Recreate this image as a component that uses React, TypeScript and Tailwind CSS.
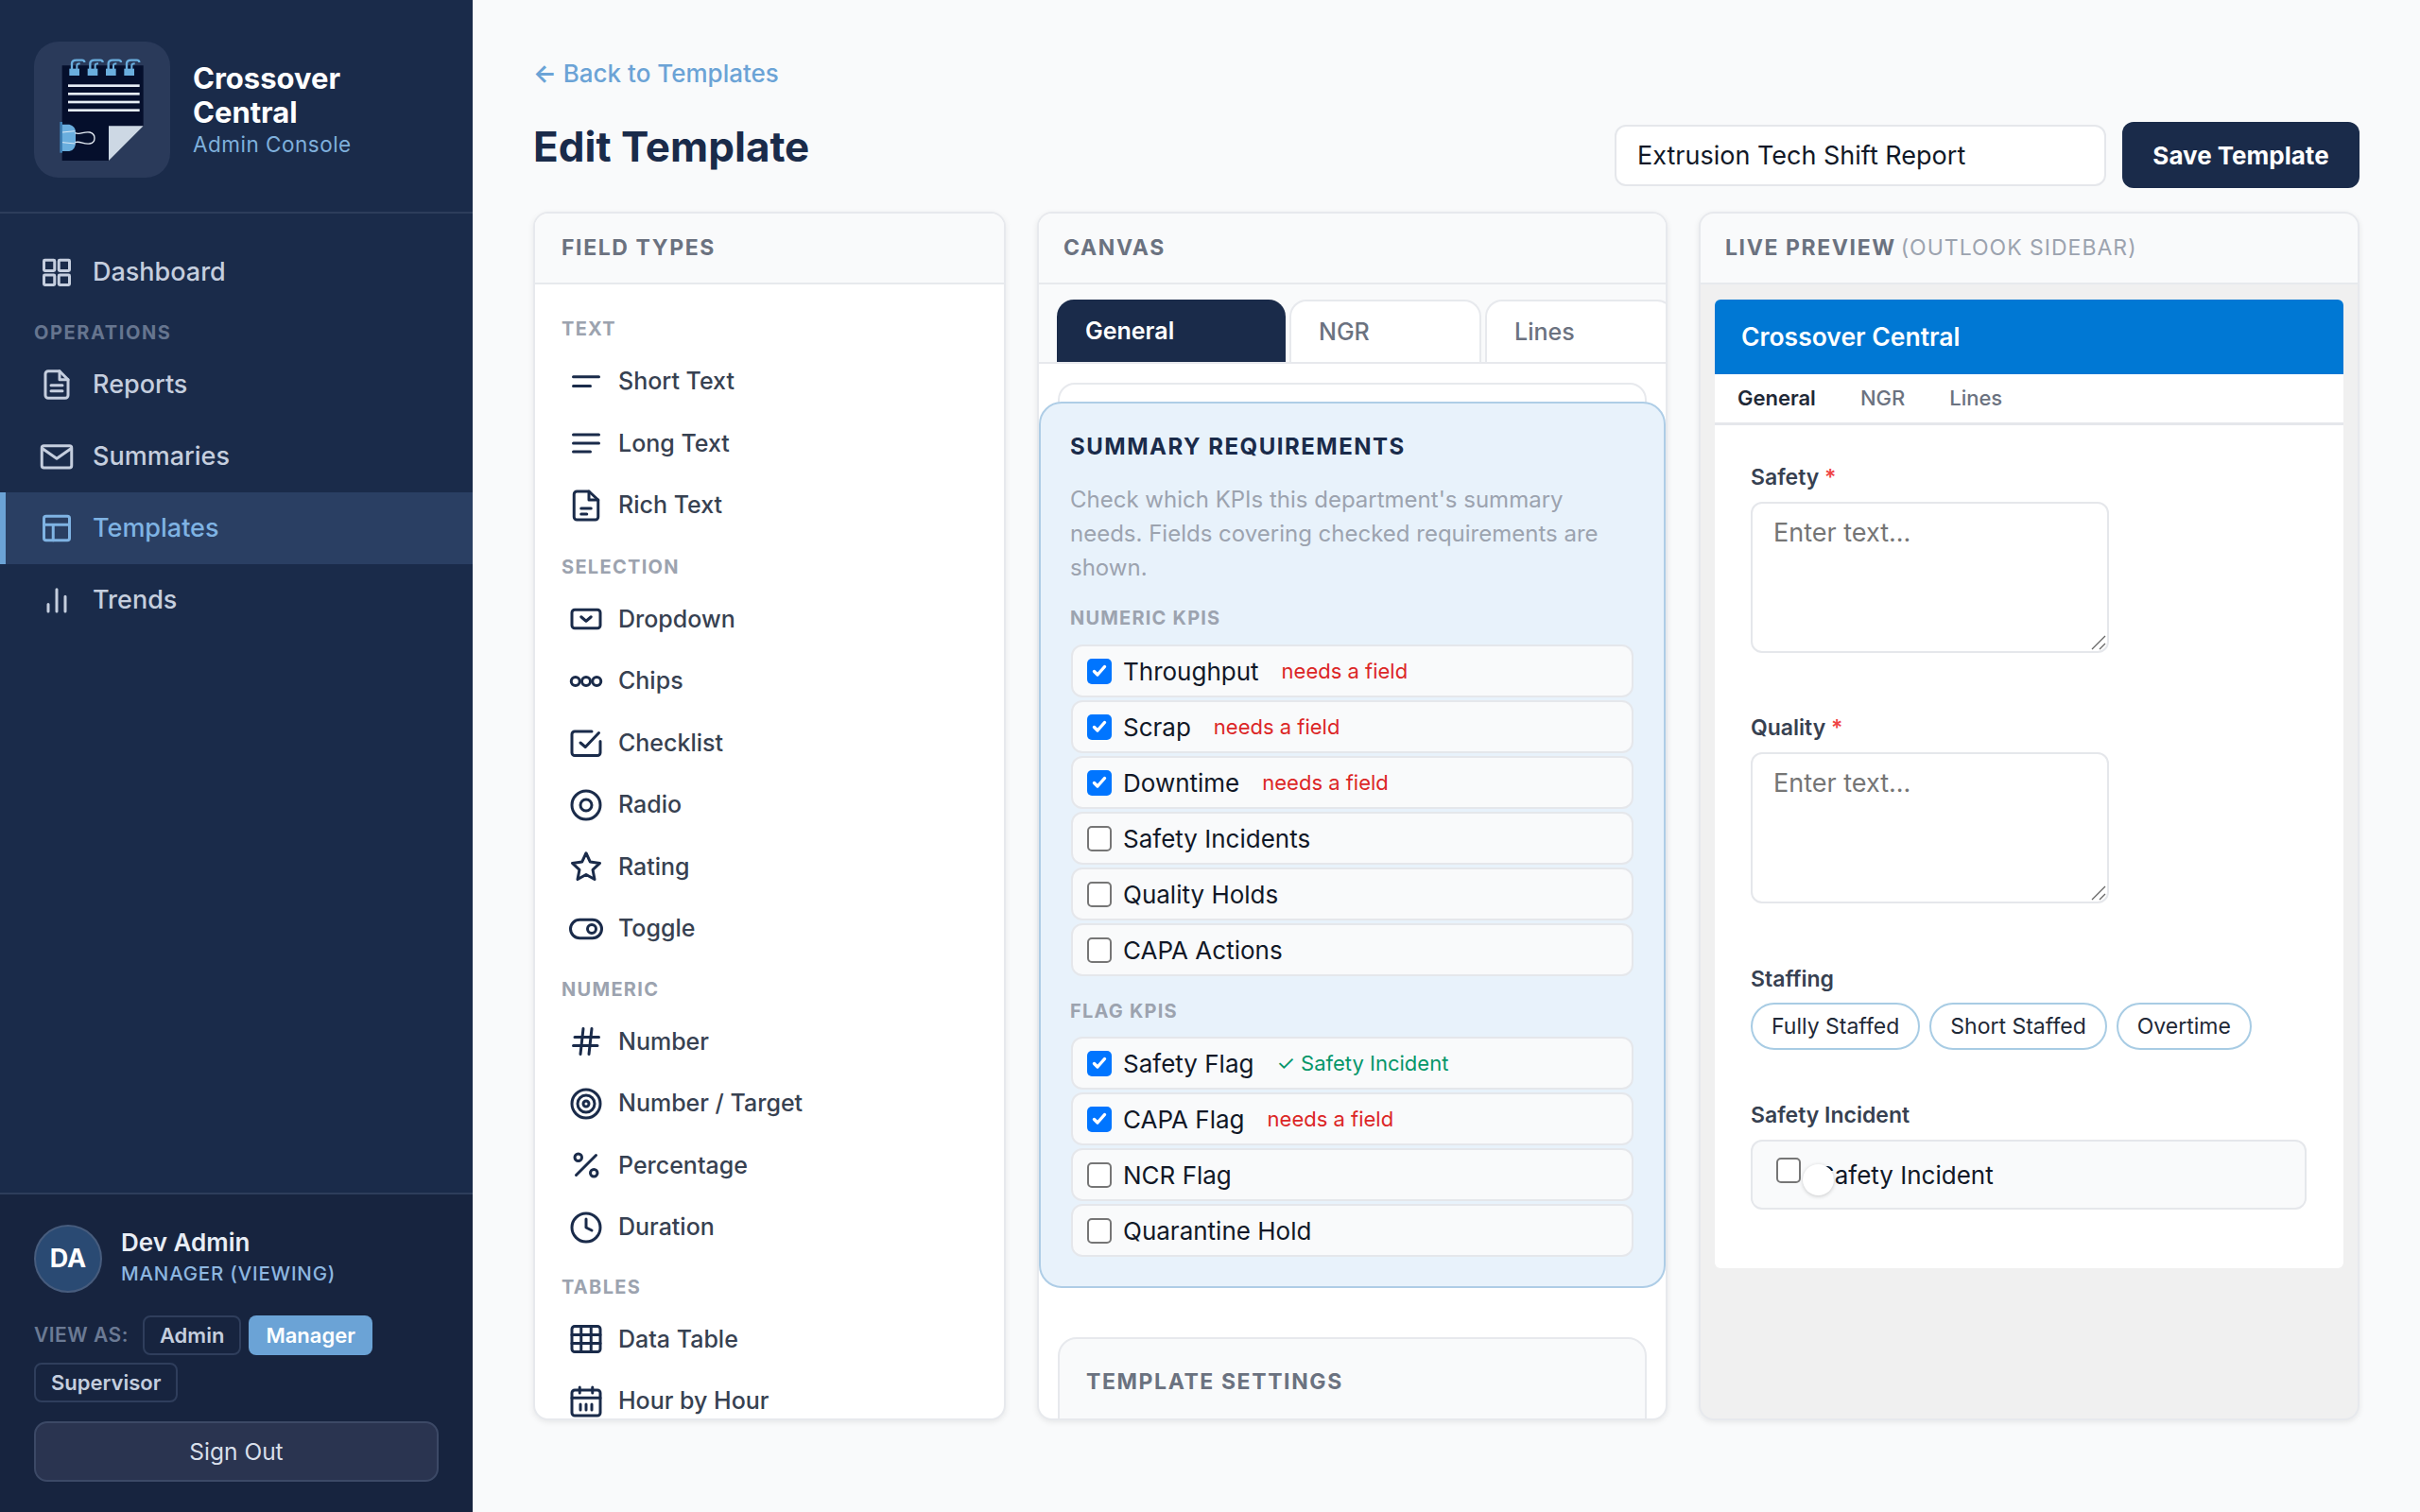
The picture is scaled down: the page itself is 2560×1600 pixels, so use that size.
import type {ReactNode} from 'react';

const Ico = ({children, size = 36, sw = 2}: {children: ReactNode; size?: number; sw?: number}) => (
    <svg width={size} height={size} viewBox="0 0 24 24" fill="none" stroke="currentColor" strokeWidth={sw}
         strokeLinecap="round" strokeLinejoin="round" className="shrink-0">
        {children}
    </svg>
);

const Logo = () => (
    <svg viewBox="48 42 432 432" className="w-full h-full">
        <path d="M137 118H395V310L285 420H137Z" fill="#050f2c"/>
        <path d="M285 310H395L285 420Z" fill="#cdd8e4"/>
        {[182, 208, 234, 260].map(y => <rect key={y} x="156" y={y - 4} width="227" height="8" fill="#e6edf5"/>)}
        {[158, 216, 274, 332].map(x => (
            <g key={x}>
                <rect x={x + 2} y="128" width="32" height="22" fill="#6aaede"/>
                <path d={`M${x + 10} 130V112Q${x + 10} 101 ${x + 24} 101H${x + 42}Q${x + 50} 101 ${x + 50} 108`}
                      stroke="#6aaede" strokeWidth="7" fill="none"/>
                <path d={`M${x + 26} 130V118Q${x + 26} 112 ${x + 36} 112`} stroke="#6aaede" strokeWidth="6"
                      fill="none"/>
            </g>
        ))}
        <path d="M133 305H160Q180 310 180 330V362Q180 385 160 390H133Z" fill="#6aaede"/>
        <path d="M130 297H138V395H130Z" fill="#3d7fb5"/>
        <path d="M138 330L178 326M138 362L178 366" stroke="#dbe9f5" strokeWidth="3"/>
        <path d="M178 332C195 340 205 326 225 330C245 335 245 362 225 366C205 370 195 356 178 362" stroke="#e6edf5"
              strokeWidth="4" fill="none"/>
    </svg>
);

const NavItem = ({icon, label, active}: {icon: ReactNode; label: string; active?: boolean}) => (
    <div className={active
        ? 'h-[76px] flex items-center gap-[20px] pl-[36px] border-l-[6px] border-[#6ba3d6] bg-[#2a3f63] text-[#7fb3e3]'
        : 'h-[76px] flex items-center gap-[20px] pl-[42px] text-[#c5cede]'}>
        {icon}
        <span className="text-[27px] font-medium leading-[36px]">{label}</span>
    </div>
);

const Sidebar = () => (
    <aside className="w-[500px] shrink-0 h-full bg-[#1a2b4a] flex flex-col">
        <div className="h-[226px] border-b-2 border-[#2d3d5b] px-[36px] pt-[44px] flex items-start gap-[24px]">
            <div className="w-[144px] h-[144px] rounded-[26px] bg-[#2a3a5a] shrink-0">
                <Logo/>
            </div>
            <div className="pt-[21px]">
                <div className="text-[31px] font-bold leading-[36px] text-white w-[180px]">Crossover Central</div>
                <div className="text-[22.500px] leading-[28px] tracking-[0.5px] text-[#7fb0dc] mt-[2px]">Admin Console</div>
            </div>
        </div>
        <nav className="pt-[24px]">
            <NavItem label="Dashboard" icon={
                <Ico size={36}><rect x="3" y="3.500" width="7.500" height="7.500" rx="0.600"/><rect x="13.500" y="3.500" width="7.500" height="7.500" rx="0.600"/><rect x="3" y="14" width="7.500" height="7" rx="0.600"/><rect x="13.500" y="14" width="7.500" height="7" rx="0.600"/></Ico>
            }/>
            <div className="h-[43px] pt-[14px] pl-[36px] text-[20px] leading-[24px] font-bold tracking-[1.600px] text-[#66758f]">OPERATIONS</div>
            <NavItem label="Reports" icon={
                <Ico size={36}><path d="M14 2.500H6A2 2 0 0 0 4 4.500v15a2 2 0 0 0 2 2h12a2 2 0 0 0 2-2V8.500Z"/><path d="M14 2.500v6h6"/><path d="M8 12.500h8M8 16.500h8"/></Ico>
            }/>
            <NavItem label="Summaries" icon={
                <Ico size={36}><rect x="1.500" y="4.500" width="21" height="15.500" rx="1.500"/><path d="M2 6.500l10 7 10-7"/></Ico>
            }/>
            <NavItem active label="Templates" icon={
                <Ico size={36}><rect x="3" y="3.500" width="18" height="17" rx="1.500"/><path d="M3 9.500h18M9.500 9.500v11"/></Ico>
            }/>
            <NavItem label="Trends" icon={
                <Ico size={36}><path d="M6 20v-5M12 20V4.500M18 20V9.500"/></Ico>
            }/>
        </nav>
        <div className="mt-auto h-[338px] border-t-2 border-[#2d3d5b] bg-[#17243f] px-[36px] pt-[32px]">
            <div className="flex items-center gap-[20px]">
                <div className="w-[72px] h-[72px] rounded-full bg-[#2a4a73] border-2 border-[#475c7d] flex items-center justify-center text-[27px] font-bold text-white">DA</div>
                <div>
                    <div className="-mt-[5px] text-[26px] leading-[36px] font-semibold text-[#e8edf5]">Dev Admin</div>
                    <div className="mt-[1px] text-[20.500px] leading-[28px] font-medium tracking-[0.8px] text-[#8db7e0]">MANAGER (VIEWING)</div>
                </div>
            </div>
            <div className="mt-[24px] flex flex-wrap items-center gap-x-[8px] gap-y-[8px]">
                <span className="text-[21px] leading-[28px] font-semibold tracking-[0.5px] text-[#6b7a94] mr-[7px]">VIEW AS:</span>
                <span className="h-[42px] px-[16px] flex items-center rounded-[8px] border-2 border-[#2f3e5c] text-[22px] font-semibold text-[#c4cede]">Admin</span>
                <span className="h-[42px] px-[18px] flex items-center rounded-[8px] bg-[#6ba3d6] text-[22px] font-semibold text-white">Manager</span>
                <span className="h-[42px] px-[16px] flex items-center rounded-[8px] border-2 border-[#2f3e5c] text-[22px] font-semibold text-[#c4cede]">Supervisor</span>
            </div>
            <button className="mt-[20px] w-[428px] h-[64px] rounded-[14px] bg-[#2a3450] border-2 border-[#3c4966] text-[24.500px] text-[#d8dfea]">Sign Out</button>
        </div>
    </aside>
);

const FieldLabel = ({children}: {children: ReactNode}) => (
    <div className="h-[40px] flex items-center text-[20px] font-bold tracking-[1.300px] text-[#9ca3af]">{children}</div>
);

const FieldItem = ({icon, label}: {icon: ReactNode; label: string}) => (
    <div className="h-[65.500px] flex items-center gap-[16px] pl-[8px] text-[#1a2b4a]">
        {icon}
        <span className="text-[25px] font-medium text-[#374151]">{label}</span>
    </div>
);

const PanelHead = ({children, inset}: {children: ReactNode; inset?: boolean}) => (
    <div className={`${inset ? 'px-[26px]' : 'px-[28px]'} h-[75px] shrink-0 bg-[#f9fafb] border-b-2 border-[#e7e9ed] flex items-center text-[23px] font-bold tracking-[1.600px] text-[#6b7280]`}>
        {children}
    </div>
);

const FieldTypes = () => (
    <section className="h-full bg-white rounded-[16px] border-2 border-[#e7e9ed] shadow-[0_2px_6px_rgba(0,0,0,0.08)] overflow-hidden flex flex-col">
        <PanelHead>FIELD TYPES</PanelHead>
        <div className="px-[28px] pt-[27px]">
            <FieldLabel>TEXT</FieldLabel>
            <div className="mt-[3px]">
                <FieldItem label="Short Text" icon={<Ico><path d="M3 8.500h18M3 15h12"/></Ico>}/>
                <FieldItem label="Long Text" icon={<Ico><path d="M3 6h18M3 12h18M3 18h12"/></Ico>}/>
                <FieldItem label="Rich Text" icon={<Ico><path d="M14 2H5.500a2 2 0 0 0-2 2v16a2 2 0 0 0 2 2h13a2 2 0 0 0 2-2V8z"/><path d="M14 2v6h6.500M8.500 14h7M8.500 18h4"/></Ico>}/>
            </div>
            <div className="mt-[12px]"><FieldLabel>SELECTION</FieldLabel></div>
            <div className="mt-[3px]">
                <FieldItem label="Dropdown" icon={<Ico><rect x="2" y="5.500" width="20" height="13" rx="2"/><path d="M8.500 10.500l3.500 3 3.500-3"/></Ico>}/>
                <FieldItem label="Chips" icon={<Ico><circle cx="4.500" cy="12" r="3"/><circle cx="12" cy="12" r="3"/><circle cx="19.500" cy="12" r="3"/></Ico>}/>
                <FieldItem label="Checklist" icon={<Ico><path d="M16 4H4a2 2 0 0 0-2 2v13a2 2 0 0 0 2 2h16a2 2 0 0 0 2-2v-8"/><path d="M8 12l3.500 3L21 5"/></Ico>}/>
                <FieldItem label="Radio" icon={<Ico><circle cx="12" cy="12" r="10"/><circle cx="12" cy="12" r="4"/></Ico>}/>
                <FieldItem label="Rating" icon={<Ico><path d="M12 2.500l2.900 6.200 6.800.9-5 4.700 1.300 6.700-6-3.300-6 3.300 1.300-6.700-5-4.700 6.800-.9z"/></Ico>}/>
                <FieldItem label="Toggle" icon={<Ico><rect x="1" y="5.500" width="22" height="13" rx="6.500"/><circle cx="16" cy="12" r="3"/></Ico>}/>
            </div>
            <div className="mt-[11px]"><FieldLabel>NUMERIC</FieldLabel></div>
            <div className="mt-[3px]">
                <FieldItem label="Number" icon={<Ico><path d="M4 9h17M3 15h17M10 3L8 21M16 3l-2 18"/></Ico>}/>
                <FieldItem label="Number / Target" icon={<Ico><circle cx="12" cy="12" r="10"/><circle cx="12" cy="12" r="6"/><circle cx="12" cy="12" r="2"/></Ico>}/>
                <FieldItem label="Percentage" icon={<Ico><path d="M19 5L5 19"/><circle cx="6.500" cy="6.500" r="2.500"/><circle cx="17.500" cy="17.500" r="2.500"/></Ico>}/>
                <FieldItem label="Duration" icon={<Ico><circle cx="12" cy="12" r="10"/><path d="M12 6v6l4 2"/></Ico>}/>
            </div>
            <div className="mt-[10px]"><FieldLabel>TABLES</FieldLabel></div>
            <div className="mt-[3px]">
                <FieldItem label="Data Table" icon={<Ico><rect x="2" y="3" width="20" height="18" rx="2"/><path d="M2 9h20M2 15h20M8.500 3v18M15.500 3v18"/></Ico>}/>
                <FieldItem label="Hour by Hour" icon={<Ico><rect x="2" y="4" width="20" height="18" rx="2"/><path d="M2 9.500h20M7.500 2v4M8 14v4M12 14v4M16 14v4M16.500 2v4"/></Ico>}/>
            </div>
        </div>
    </section>
);

const Check = ({on, className}: {on?: boolean; className?: string}) => (
    <span className={`${on ? 'bg-[#0075ff]' : 'bg-white border-2 border-[#767676]'} w-[26px] h-[27px] rounded-[5px] shrink-0 flex items-center justify-center ${className ?? ''}`}>
        {on && (
            <svg width="20" height="20" viewBox="0 0 20 20" fill="none" stroke="white" strokeWidth="3.400" strokeLinecap="round" strokeLinejoin="round">
                <path d="M4.500 10.500l3.500 3.500 7.500-8.500"/>
            </svg>
        )}
    </span>
);

const Kpi = ({label, on, hint, ok}: {label: string; on?: boolean; hint?: string; ok?: boolean}) => (
    <div className="h-[56px] mb-[3px] bg-[#f9fafb] border-2 border-[#e5e7eb] rounded-[12px] flex items-center pl-[15px]">
        <Check on={on}/>
        <span className="ml-[12px] text-[26px] text-[#111827]">{label}</span>
        {hint && <span className={`ml-[24px] text-[22px] ${ok ? 'text-[#059669]' : 'text-[#dc2626]'}`}>{hint}</span>}
    </div>
);

const CanvasPanel = () => (
    <section className="h-full bg-white rounded-[16px] border-2 border-[#e7e9ed] shadow-[0_2px_6px_rgba(0,0,0,0.08)] overflow-hidden flex flex-col">
        <PanelHead inset>CANVAS</PanelHead>
        <div className="bg-[#f9fafb] h-[16px] shrink-0"/>
        <div className="bg-[#f9fafb] shrink-0 flex gap-[4px] pl-[19px] h-[68px] border-b-2 border-[#e7e9ed] overflow-hidden">
            <div className="w-[242px] shrink-0 h-[66px] rounded-t-[18px] bg-[#1a2b4a] pl-[30px] pt-[2px] flex items-center text-[25px] font-semibold text-white">General</div>
            <div className="w-[203px] h-[66px] rounded-t-[18px] bg-white border-2 border-b-0 border-[#e7e9ed] pl-[29px] pt-[2px] flex items-center text-[25px] font-medium text-[#6b7280] shrink-0">NGR</div>
            <div className="w-[200px] h-[66px] rounded-t-[18px] bg-white border-2 border-b-0 border-[#e7e9ed] pl-[29px] pt-[2px] flex items-center text-[25px] font-medium text-[#6b7280] shrink-0">Lines</div>
        </div>
        <div className="px-[20px] pt-[20px]">
            <div className="h-[40px] bg-white border-2 border-[#e7e9ed] rounded-t-[18px]"/>
            <div className="relative -mt-[20px] -mx-[20px] h-[938px] bg-[#e8f2fb] border-2 border-[#aecde6] rounded-[24px] px-[31px]">
                <div className="mt-[29px] text-[24px] leading-[34px] font-bold tracking-[1.500px] text-[#1a2b4a]">SUMMARY REQUIREMENTS</div>
                <p className="mt-[21px] text-[24px] leading-[36px] text-[#9ca3af]">Check which KPIs this department's summary needs. Fields covering checked requirements are shown.</p>
                <div className="mt-[22px] text-[20px] leading-[26px] font-bold tracking-[1.200px] text-[#9ca3af]">NUMERIC KPIS</div>
                <div className="mt-[15px] mx-[1px]">
                    <Kpi on label="Throughput" hint="needs a field"/>
                    <Kpi on label="Scrap" hint="needs a field"/>
                    <Kpi on label="Downtime" hint="needs a field"/>
                    <Kpi label="Safety Incidents"/>
                    <Kpi label="Quality Holds"/>
                    <Kpi label="CAPA Actions"/>
                </div>
                <div className="mt-[24px] text-[20px] leading-[26px] font-bold tracking-[1.200px] text-[#9ca3af]">FLAG KPIS</div>
                <div className="mt-[14px] mx-[1px]">
                    <Kpi on label="Safety Flag" hint="✓ Safety Incident" ok/>
                    <Kpi on label="CAPA Flag" hint="needs a field"/>
                    <Kpi label="NCR Flag"/>
                    <Kpi label="Quarantine Hold"/>
                </div>
            </div>
            <div className="mt-[52px] h-[200px] bg-[#f9fafb] border-2 border-[#e7e9ed] rounded-[20px] px-[28px] pt-[29px] text-[23px] leading-[32px] font-bold tracking-[1.600px] text-[#6b7280]">TEMPLATE SETTINGS</div>
        </div>
    </section>
);

const Area = () => (
    <div className="relative w-[379px] h-[160px]">
        <textarea placeholder="Enter text..." className="w-full h-full resize-none rounded-[12px] border-2 border-[#e5e7eb] bg-white px-[22px] py-[14px] text-[27px] leading-[34px] placeholder:text-[#757575] outline-none"/>
        <svg width="16" height="16" viewBox="0 0 16 16" className="absolute right-[3px] bottom-[3px]" stroke="#666" strokeWidth="1.300">
            <path d="M1 15L15 1M9 15l6-6"/>
        </svg>
    </div>
);

const PreviewLabel = ({children}: {children: ReactNode}) => (
    <div className="text-[23px] leading-[30px] font-semibold text-[#374151]">{children}</div>
);

const Chip = ({children}: {children: string}) => (
    <span className="h-[50px] px-[20px] flex items-center rounded-full border-2 border-[#a8cce4] text-[23px] text-[#1f2937]">{children}</span>
);

const PreviewPanel = () => (
    <section className="h-full bg-[#f0f0f0] rounded-[16px] border-2 border-[#e7e9ed] shadow-[0_2px_6px_rgba(0,0,0,0.08)] overflow-hidden flex flex-col">
        <PanelHead inset>
            LIVE PREVIEW <span className="ml-[5px] font-normal tracking-[1px] text-[#9ca3af]">(OUTLOOK SIDEBAR)</span>
        </PanelHead>
        <div className="mt-[16px] mx-[15px] h-[1025px] bg-white rounded-[6px] overflow-hidden">
            <div className="h-[79px] bg-[#0078d4] pl-[28px] flex items-center text-[26.500px] font-semibold text-white">Crossover Central</div>
            <div className="h-[54px] border-b-[3px] border-[#e5e7eb] pl-[24px] flex items-center gap-[47px] text-[22px] font-medium text-[#6b7280]">
                <span className="font-semibold text-[#1f2937]">General</span>
                <span>NGR</span>
                <span>Lines</span>
            </div>
            <div className="px-[38px] pt-[40px]">
                <PreviewLabel>Safety <span className="text-[#ef4444]">*</span></PreviewLabel>
                <div className="mt-[11px]"><Area/></div>
                <div className="mt-[64px]"><PreviewLabel>Quality <span className="text-[#ef4444]">*</span></PreviewLabel></div>
                <div className="mt-[11px]"><Area/></div>
                <div className="mt-[65px]"><PreviewLabel>Staffing</PreviewLabel></div>
                <div className="mt-[10px] flex gap-[10px]">
                    <Chip>Fully Staffed</Chip>
                    <Chip>Short Staffed</Chip>
                    <Chip>Overtime</Chip>
                </div>
                <div className="mt-[54px]"><PreviewLabel>Safety Incident</PreviewLabel></div>
                <div className="relative mt-[11px] w-[588px] h-[74px] bg-[#f9fafb] border-2 border-[#e5e7eb] rounded-[12px] flex items-center pl-[70px]">
                    <span className="text-[26px] text-[#111827]">Safety Incident</span>
                    <Check className="absolute left-[25px] top-[17px]"/>
                    <span className="absolute left-[53px] top-[24px] w-[33px] h-[33px] rounded-full bg-white shadow-[0_1px_4px_rgba(0,0,0,0.2)]"/>
                </div>
            </div>
        </div>
    </section>
);

const App = () => (
    <div className="w-[2560px] h-[1600px] flex overflow-hidden bg-[#f9fafb] font-[Inter,sans-serif]">
        <Sidebar/>
        <main className="flex-1 min-w-0 pl-[64px] pr-[64px] pt-[61px] flex flex-col">
            <div className="flex justify-between items-end mb-[25px]">
                <div className="pb-[15px]">
                    <div className="text-[26px] leading-[34px] font-medium text-[#6ba3d6]"><span className="font-bold">←</span> Back to Templates</div>
                    <h1 className="mt-[31px] text-[44px] leading-[58px] font-bold text-[#1a2b4a]">Edit Template</h1>
                </div>
                <div className="flex items-center gap-[17px]">
                    <input defaultValue="Extrusion Tech Shift Report" className="w-[520px] h-[65px] rounded-[12px] border-2 border-[#e5e7eb] bg-white px-[22px] text-[27px] text-[#111827] outline-none"/>
                    <button className="w-[251px] h-[70px] rounded-[12px] bg-[#1a2b4a] text-[26px] font-bold text-white">Save Template</button>
                </div>
            </div>
            <div className="h-[1279px] grid grid-cols-[500px_667px_699px] gap-x-[33px]">
                <FieldTypes/>
                <CanvasPanel/>
                <PreviewPanel/>
            </div>
        </main>
    </div>
);

export default App;
